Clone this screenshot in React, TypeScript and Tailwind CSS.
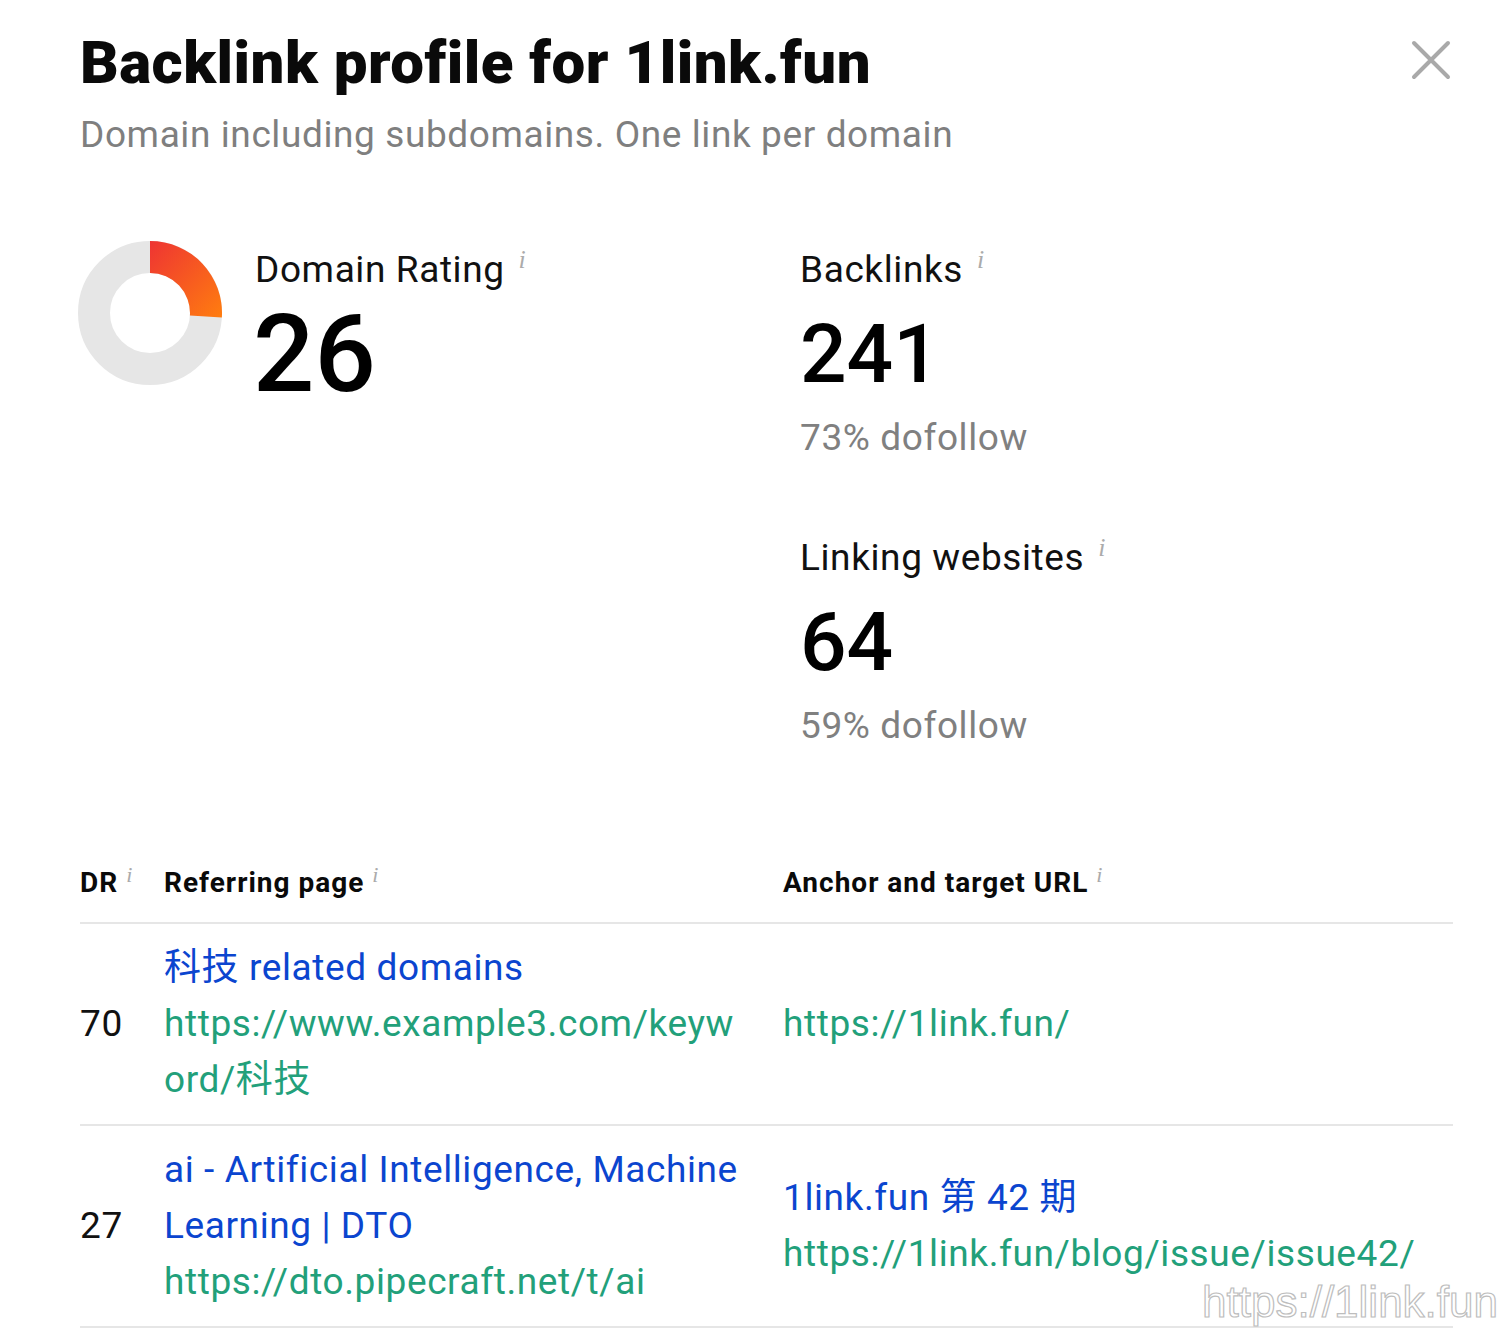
import React from "react";

const body = { fontFamily: 'Roboto, "Noto Sans CJK SC", sans-serif' };

function Info({ className = "" }: { className?: string }) {
  return (
    <span
      className={"inline-block align-top text-[#ababab] italic " + className}
      style={{ fontFamily: '"Liberation Serif", serif' }}
    >
      i
    </span>
  );
}

function Donut() {
  return (
    <svg width="144" height="144" viewBox="0 0 144 144" className="shrink-0">
      <defs>
        <linearGradient id="drg" x1="0" y1="0" x2="1" y2="1">
          <stop offset="0" stopColor="#ee3433" />
          <stop offset="1" stopColor="#ff7d0f" />
        </linearGradient>
      </defs>
      <circle cx="72" cy="72" r="56" fill="none" stroke="#e6e6e6" strokeWidth="32" />
      <path
        d="M 72 0 A 72 72 0 0 1 143.86 76.52 L 111.92 74.51 A 40 40 0 0 0 72 32 Z"
        fill="url(#drg)"
      />
    </svg>
  );
}

function StatBlock({
  label,
  value,
  sub,
  big,
}: {
  label: string;
  value: string;
  sub?: string;
  big?: boolean;
}) {
  return (
    <div className="flex flex-col">
      <div className="h-[48px] text-[37px] leading-[48px] tracking-[0.6px] text-[#111]">
        {label}
        <Info className="ml-[14px] mt-[1px] text-[26px] leading-[26px]" />
      </div>
      <div
        className={
          "mt-[12px] h-[96px] leading-[96px] text-black " +
          (big ? "text-[108px] font-medium -ml-[2px]" : "text-[82px] font-medium")
        }
      >
        {value}
      </div>
      {sub && (
        <div className="mt-[12px] h-[48px] text-[37px] leading-[48px] tracking-[0.6px] text-[#808080]">
          {sub}
        </div>
      )}
    </div>
  );
}

const th = "inline-block";

export default function App() {
  return (
    <div className="relative min-h-[1330px] w-[1508px] overflow-hidden bg-white" style={body}>
      <div className="pl-[80px] pr-[55px] pt-[28px]">
        <div className="flex items-start justify-between">
          <div>
            <h1
              className="h-[70px] text-[60px] leading-[70px] font-black tracking-[0.5px] text-[#0a0a0a]"
              style={{ fontFamily: "Roboto, sans-serif" }}
            >
              Backlink profile for 1link.fun
            </h1>
            <p className="mt-[13px] h-[48px] text-[37px] leading-[48px] tracking-[0.6px] text-[#7f7f7f]">
              Domain including subdomains. One link per domain
            </p>
          </div>
          <button className="mt-[12px] mr-[2px] h-[40px] w-[40px]" aria-label="Close">
            <svg width="40" height="40" viewBox="0 0 40 40">
              <path d="M3 3 L37 37 M37 3 L3 37" stroke="#a9a9a9" strokeWidth="4" strokeLinecap="round" />
            </svg>
          </button>
        </div>

        <div className="mt-[87px] grid grid-cols-[720px_1fr]">
          <div className="flex items-start">
            <div className="-ml-[2px] mt-[-5px]">
              <Donut />
            </div>
            <div className="ml-[33px]">
              <StatBlock label="Domain Rating" value="26" big />
            </div>
          </div>
          <div className="flex flex-col gap-[72px]">
            <StatBlock label="Backlinks" value="241" sub="73% dofollow" />
            <StatBlock label="Linking websites" value="64" sub="59% dofollow" />
          </div>
        </div>

        <div className="mt-[113px]">
          <div className="grid grid-cols-[84px_619px_1fr] border-b-2 border-[#e6e6e6] pb-[19px] text-[28px] leading-[40px] font-bold tracking-[1px] text-[#0a0a0a]">
            <div className={th}>
              DR<Info className="ml-[8px] mt-[1px] text-[22px] leading-[22px] font-normal" />
            </div>
            <div className={th}>
              Referring page<Info className="ml-[8px] mt-[1px] text-[22px] leading-[22px] font-normal" />
            </div>
            <div className={th}>
              Anchor and target URL
              <Info className="ml-[8px] mt-[1px] text-[22px] leading-[22px] font-normal" />
            </div>
          </div>

          <div className="grid grid-cols-[84px_619px_1fr] items-center border-b-2 border-[#e6e6e6] py-[16px] text-[37px] leading-[56px] tracking-[0.6px]">
            <div className="text-[#111]">70</div>
            <div>
              <div className="text-[#0b45cf]">科技 related domains</div>
              <div className="text-[#22a07a]">https://www.example3.com/keyw</div>
              <div className="text-[#22a07a]">ord/科技</div>
            </div>
            <div className="text-[#22a07a]">https://1link.fun/</div>
          </div>

          <div className="grid grid-cols-[84px_619px_1fr] items-center border-b-2 border-[#e6e6e6] py-[16px] text-[37px] leading-[56px] tracking-[0.6px]">
            <div className="text-[#111]">27</div>
            <div>
              <div className="text-[#0b45cf]">ai - Artificial Intelligence, Machine</div>
              <div className="text-[#0b45cf]">Learning | DTO</div>
              <div className="text-[#22a07a]">https://dto.pipecraft.net/t/ai</div>
            </div>
            <div>
              <div className="text-[#0b45cf]">1link.fun 第 42 期</div>
              <div className="text-[#22a07a]">https://1link.fun/blog/issue/issue42/</div>
            </div>
          </div>
        </div>
      </div>

      <div
        className="absolute right-[10px] top-[1279px] text-[44px] leading-[46px] text-white [-webkit-text-stroke:1.2px_#bdbdbd]"
        style={{ fontFamily: '"Liberation Sans", sans-serif' }}
      >
        https://1link.fun
      </div>
    </div>
  );
}
